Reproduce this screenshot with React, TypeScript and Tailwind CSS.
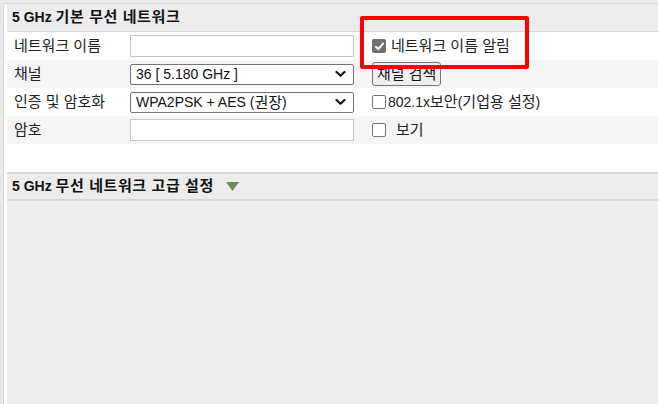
import React from "react";

const font = { fontFamily: '"Liberation Sans", "Noto Sans CJK KR", sans-serif' };

function T({ children, wide }: { children: string; wide?: boolean }) {
  const parts = children.split(/([\uAC00-\uD7A3]+(?:\s+[\uAC00-\uD7A3]+)*)/);
  return (
    <>
      {parts.map((p, i) =>
        /[\uAC00-\uD7A3]/.test(p) ? (
          <span key={i} className={wide ? "text-[15px] tracking-[0.6px]" : "text-[15px]"}>
            {p}
          </span>
        ) : (
          <span key={i}>{p}</span>
        )
      )}
    </>
  );
}

function Chevron() {
  return (
    <svg width="11" height="7" viewBox="0 0 11 7" className="absolute right-[7px] top-1/2 -translate-y-1/2">
      <polyline points="1.5,1.5 5.5,5.2 9.5,1.5" fill="none" stroke="#111" strokeWidth="2.2" strokeLinecap="round" strokeLinejoin="round" />
    </svg>
  );
}

function Select({ value }: { value: string }) {
  return (
    <div className="relative w-[224px] h-[21px] border border-[#767676] rounded-[2px] bg-white flex items-center pl-[5px] text-[14px] text-[#111] leading-none whitespace-pre">
      <T>{value}</T>
      <Chevron />
    </div>
  );
}

function TextInput() {
  return <div className="w-[224px] h-[22px] border border-[#c8c8c8] bg-white" />;
}

function Box({ checked }: { checked?: boolean }) {
  if (checked) {
    return (
      <div className="w-[14px] h-[14px] rounded-[2px] bg-[#6f6f6f] flex items-center justify-center shrink-0">
        <svg width="11" height="11" viewBox="0 0 11 11">
          <polyline points="2,5.8 4.4,8.2 9,2.6" fill="none" stroke="#fff" strokeWidth="2" strokeLinecap="round" strokeLinejoin="round" />
        </svg>
      </div>
    );
  }
  return <div className="w-[14px] h-[14px] rounded-[2px] border border-[#767676] bg-white shrink-0" />;
}

function Row({ label, field, right, shade }: { label: string; field: React.ReactNode; right: React.ReactNode; shade?: boolean }) {
  return (
    <div className={`flex items-center h-[28px] ${shade ? "bg-[#f5f5f5]" : "bg-white"}`}>
      <div className="w-[123px] pl-[7px] text-[14px] text-[#222] whitespace-pre">
        <T>{label}</T>
      </div>
      <div className="w-[242px]">{field}</div>
      <div className="flex-1 flex items-center text-[14px] text-[#222] whitespace-pre">{right}</div>
    </div>
  );
}

export default function App() {
  return (
    <div className="w-[658px] h-[404px] bg-[#e9e9e9] pt-[3px] pl-[3px] overflow-hidden" style={font}>
      <div className="relative h-full border-l border-t border-[#d6d6d6] bg-white pl-[3px] flex flex-col">
        <div className="h-[28px] bg-[#ececec] border-b border-[#d8d8d8] flex items-center pl-[5px] text-[14px] font-bold text-[#111] whitespace-pre">
          <T wide>5 GHz 기본 무선 네트워크</T>
        </div>
        <Row
          label="네트워크 이름"
          field={<TextInput />}
          right={
            <>
              <Box checked />
              <span className="ml-[5px]">
                <T>네트워크 이름 알림</T>
              </span>
            </>
          }
        />
        <Row
          shade
          label="채널"
          field={<Select value="36 [ 5.180 GHz ]" />}
          right={
            <div className="h-[24px] px-[4px] border border-[#767676] rounded-[3px] bg-[#efefef] flex items-center text-[#111]">
              <T>채널 검색</T>
            </div>
          }
        />
        <Row
          label="인증 및 암호화"
          field={<Select value="WPA2PSK + AES (권장)" />}
          right={
            <>
              <Box />
              <span className="ml-[2px]">
                <T>802.1x보안(기업용 설정)</T>
              </span>
            </>
          }
        />
        <Row
          shade
          label="암호"
          field={<TextInput />}
          right={
            <>
              <Box />
              <span className="ml-[10px]">
                <T>보기</T>
              </span>
            </>
          }
        />
        <div className="h-[28px] bg-white" />
        <div className="h-[29px] bg-[#ececec] border-t-2 border-b-2 border-[#d6d6d6] flex items-center pl-[5px] text-[14px] font-bold text-[#111] whitespace-pre">
          <T wide>5 GHz 무선 네트워크 고급 설정</T>
          <svg width="13" height="9" viewBox="0 0 13 9" className="ml-[12px]">
            <polygon points="0,0 13,0 6.5,9" fill="#6e8a4e" />
          </svg>
        </div>
        <div className="flex-1 bg-[#ededed]" />
        <div className="absolute left-[356px] top-[12px] w-[169px] h-[53px] border-[4px] border-[#ff0000] rounded-[2px]" />
      </div>
    </div>
  );
}
